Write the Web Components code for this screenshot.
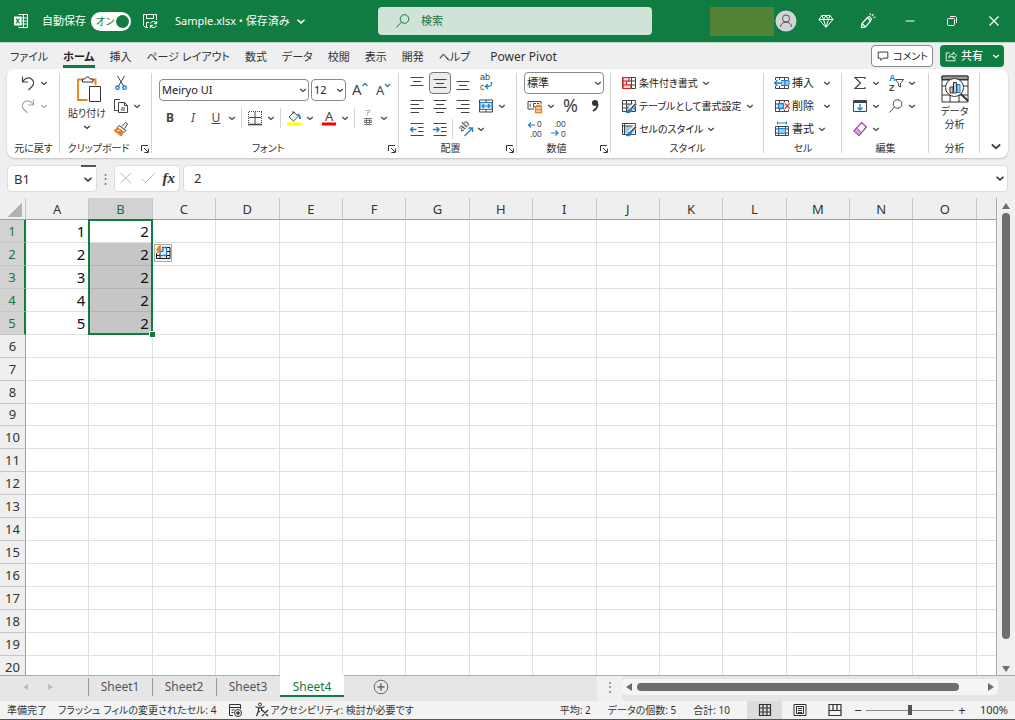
<!DOCTYPE html>
<html lang="ja">
<head>
<meta charset="utf-8">
<title>Sample.xlsx - Excel</title>
<style>
html,body{margin:0;height:100%;overflow:hidden}
body{font:11px/16px "Noto Sans","Noto Sans CJK JP",sans-serif;font-feature-settings:"palt";color:#333;background:#efefef}
</style>
</head>
<body>
<xl-app></xl-app>
<script>
const base = `<style>
*,*::before,*::after{box-sizing:border-box}
:host([hidden]){display:none}
button{font:inherit;font-feature-settings:inherit;color:inherit;background:none;border:0;padding:0;margin:0;display:inline-flex;align-items:center;white-space:nowrap}
a{color:inherit;text-decoration:none;white-space:nowrap}
</style>`;
const define = (name, html) => {
  customElements.define(name, class extends HTMLElement {
    connectedCallback() {
      if (this.shadowRoot) return;
      const root = this.attachShadow({mode: 'open'});
      root.innerHTML = base + (typeof html === 'function' ? html(this) : html);
    }
  });
};

/* Icon shapes, 16 x 16 unless a viewBox is listed in boxes */
const B = '#1e7fcb', O = '#e8811a', L = '#9ccaf0';
const lines = (rows) => rows.map(([x1, x2, y]) => `<path d="M${x1} ${y}H${x2}"/>`).join('');
const tableGrid = '<path d="M1.5 2.5h13v11h-13zM1.5 6h13M1.5 10h13M5.5 2.5v11M10.5 2.5v11"/>';
const boxes = {chev: '0 0 8 8', paste: '0 0 28 28', analyze: '0 0 28 28', avatar: '0 0 22 22', launch: '0 0 8 8'};
const icons = {
  chev: '<path d="M1.2 3L4 5.500 6.800 3" stroke-width="1.3"/>',
  launch: '<path d="M.5 6V.5H7M3 3l4 4M7.400 3.500v4h-4" />',
  excel: '<path d="M5.500 1.500h9v13h-9M5.500 5h9M5.500 8h9M5.500 11h9M10.500 1.500v13"/><path d="M1 3.500h7.500v9H1z" fill="#fff" stroke="none"/><path d="M3 5.500l3.500 5M6.500 5.500L3 10.500" stroke="#107c41" stroke-width="1.300"/>',
  save: '<path d="M6 14.500H3.500l-2-2v-11h13V7M4.500 1.500v4h7v-4M4.500 14V9.500H7"/><path d="M8.500 10.500a3.200 3.200 0 0 1 6 0M14.700 8v2.700H12M14.500 12.500a3.200 3.200 0 0 1-6 0M8.300 15v-2.700H11"/>',
  search: '<circle cx="9.500" cy="6" r="4.300"/><path d="M6.300 9.200L1.500 14.500"/>',
  avatar: '<circle cx="11" cy="11" r="10.500" fill="#d4d4d4" stroke="none"/><circle cx="11" cy="8.500" r="3.600"/><path d="M5.500 17c.3-6.500 10.700-6.500 11 0"/>',
  gem: '<path d="M4 2.500h8l3 4-7 8-7-8zM1 6.500h14M5.500 6.500L8 14M10.500 6.500L8 14M4 2.500l1.500 4L8 2.500l2.500 4 1.500-4"/>',
  pen: '<path d="M7.500 4.500L2 10.500l-.5 4 4-.5L10.500 8zM7.500 4.500L9.500 3.500l2 2.500L10.500 8M2 10.500l3.500 3.500M10 .5l.5 1.500M13.500 1l-1.500 2M15.500 4l-2 .5" stroke-width="1.200"/>',
  min: '<path d="M3.500 8h9"/>',
  restore: '<rect x="3.500" y="5.500" width="7" height="7" rx="1"/><path d="M6 3.500h5.500l1 1V10"/>',
  close: '<path d="M3.500 3.500l9 9M12.500 3.500l-9 9" stroke-width="1.200"/>',
  comment: '<path d="M2.500 3.500h11v7H8L5.500 13v-2.500h-3z"/>',
  share: '<path d="M6.500 4.500h-4v9h10v-3M5.500 10c.5-3 2-4 5-4V3.500l4 4-4 3.500V8.500c-2.500 0-4 .3-5 1.500z"/>',
  undo: '<path d="M2.500 1.500v5.500H8M2.500 7C5 2.500 9 2 11.500 4s3 5 .5 7.500L8.500 15" stroke-width="1.200"/>',
  redo: '<path d="M13.500 1.500v5.500H8M13.500 7C11 2.500 7 2 4.500 4s-3 5-.5 7.500L7.500 15" stroke-width="1.200"/>',
  paste: `<path d="M10 4.500H5v20.500h9.500M19.500 4.500H22.500V10" stroke="${O}" stroke-width="1.800"/><path d="M9.500 7v-3h2.500c1-3 4-3 5 0h3v3z"/><path d="M16.500 11.500h11v15h-11z" fill="#fff"/>`,
  cut: `<path d="M4.500 1l6 10M11.500 1l-6 10"/><circle cx="4.500" cy="12.700" r="1.700" stroke="${B}" stroke-width="1.400"/><circle cx="11.500" cy="12.700" r="1.700" stroke="${B}" stroke-width="1.400"/>`,
  copy: '<path d="M5 12.500H1.500v-11h5.500M5.500 4.500h6l3 3v7h-9zM11.500 4.500v3h3M8 10h4M8 12h4"/>',
  brush: `<path d="M9 5.500L12.500 1.500l2 1.500-3 4.500M6 4.500l7 5-2 2-7-5z"/><path d="M4.500 7l6 4.500-2.500 3.500L1 9.500z" fill="${O}" stroke="${O}"/><path d="M4 10l2.500-1" stroke="#fff"/>`,
  grow: `<text x="0" y="13" font-size="15" fill="#444" stroke="none">A</text><path d="M10.500 4L13 1.500l2.500 2.500" stroke="${B}" stroke-width="1.300"/>`,
  shrink: `<text x="1" y="13" font-size="13" fill="#444" stroke="none">A</text><path d="M10 2L12.500 4.500 15 2" stroke="${B}" stroke-width="1.300"/>`,
  border: '<path d="M2 1.500h13M1.500 2v12M14.500 2v12" stroke-dasharray="1 1"/><path d="M8 2v12M2 7.500h12" /><path d="M1 14.500h14" stroke-width="1.600"/>',
  fill: `<path d="M3 7l5-5 4 4.500-4.500 4.500z"/><path d="M7 1v3"/><path d="M11.500 4c2 .5 2.500 2 2.500 5" stroke="${B}" stroke-width="1.800"/><path d="M1 12.500h14v3H1z" fill="#ff0" stroke="none"/>`,
  fontcolor: '<text x="4" y="11" font-size="13" fill="#444" stroke="none">A</text><path d="M1 12.500h14v3H1z" fill="red" stroke="none"/>',
  ruby: '<g fill="#777" stroke="none"><text x="5" y="5" font-size="6">ア</text><path d="M4 8.500h8M4 14.500h8M6.500 8.500v6M9.500 8.500v6M4.500 10.500h7v2h-7z" stroke="#777" fill="none"/></g>',
  atop: lines([[1.5, 14.5, 2.500], [4, 12, 6.500], [1.5, 14.500, 10.500]]),
  amid: lines([[1.5, 14.5, 4.500], [4, 12, 8.500], [1.5, 14.500, 12.500]]),
  abot: lines([[1.5, 14.5, 6.500], [4, 12, 10.500], [1.5, 14.500, 14.500]]),
  wrap: `<g fill="#444" stroke="none" font-size="9" font-family="Liberation Sans"><text x="2" y="5">ab</text><text x="2" y="15">c</text></g><path d="M13.500 7v2c0 2-1 2.500-6 2.500M10 9l-2.500 2.500L10 14" stroke="${B}" stroke-width="1.300"/>`,
  al: lines([[1.5, 14.5, 2.500], [1.5, 10, 6.500], [1.5, 14.500, 10.500], [1.5, 10, 14.500]]),
  ac: lines([[1.5, 14.5, 2.500], [4, 12, 6.500], [1.5, 14.500, 10.500], [4, 12, 14.500]]),
  ar: lines([[1.5, 14.5, 2.500], [6, 14.5, 6.500], [1.5, 14.500, 10.500], [6, 14.500, 14.500]]),
  merge: `<path d="M1.500 2h13v12h-13zM1.500 4.500h13M1.500 11.500h13M8 2v2M8 12v2"/><path d="M2 4.500h12v7H2z" fill="#d5eaf9" stroke="${B}"/><path d="M4 8h8M6 6L4 8l2 2M10 6l2 2-2 2" stroke="${B}" stroke-width="1.200"/>`,
  outd: lines([[1.5, 14.5, 2.500], [9, 14.5, 6.500], [9, 14.5, 10.500], [1.5, 14.500, 14.500]]) + `<path d="M1.500 8.500h6M4 6L1.500 8.500 4 11" stroke="${B}" stroke-width="1.400"/>`,
  ind: lines([[1.5, 14.5, 2.500], [9, 14.5, 6.500], [9, 14.5, 10.500], [1.5, 14.500, 14.500]]) + `<path d="M1 8.500h6M4.500 6L7 8.500 4.500 11" stroke="${B}" stroke-width="1.400"/>`,
  orient: `<text font-size="10" font-family="Liberation Sans" transform="translate(5 11) rotate(-45)" fill="#444" stroke="none">ab</text><path d="M7.500 15L15.500 7M11.500 7h4v4" stroke="${B}" stroke-width="1.300"/>`,
  currency: `<path d="M1 3.500h13v3M1 3.500v7.500h6M4 5.500a2 2 0 0 0 0 3.500M9 5.500H6.500V9H8M12 5.500h-2"/><path d="M8.500 8.500h6v6h-6z" fill="#fbe3cb" stroke="${O}" stroke-width="1.300"/><path d="M8.500 11.500h6M9 8.500c1-1.500 4-1.500 5 0" stroke="${O}" stroke-width="1.300"/>`,
  percent: '<text x="0" y="14" font-size="18" fill="#444" stroke="none">%</text>',
  comma: '<circle cx="8" cy="5" r="3" fill="#333" stroke="none"/><path d="M10 4c1.500 4-.5 7-4 9" stroke="#333" stroke-width="1.800"/>',
  incdec: `<g fill="#444" stroke="none" font-size="8.500" font-family="Liberation Sans"><text x="10" y="6">0</text><text x="3" y="15.500">.00</text></g><path d="M1 4h7M4 1.500L1.500 4 4 6.500" stroke="${B}" stroke-width="1.200"/>`,
  decdec: `<g fill="#444" stroke="none" font-size="8.500" font-family="Liberation Sans"><text x="3" y="6">.00</text><text x="10" y="15.500">0</text></g><path d="M0 12h7M4.500 9.500L7 12l-2.500 2.500" stroke="${B}" stroke-width="1.200"/>`,
  cond: `${tableGrid}<path d="M2 2.500h6v3.500H2zM2 10h8v3.500H2zM2 6h3.500v4H2z" fill="#f9d2d2" stroke="#d22" stroke-width="1.200"/>`,
  tstyle: `<path d="M5.500 6h9v7.500h-9z" fill="${L}" stroke="none"/>${tableGrid}<path d="M14.500 5L8 12.500" stroke="#fff" stroke-width="4"/><path d="M15 5.500L9.500 11.500" stroke-width="1.800"/><path d="M8.500 11c-2 .5-1 2.500-3.500 3.500 3 .8 5 0 5.500-2z" fill="${B}" stroke="${B}"/>`,
  cstyle: `<path d="M3.500 5h10v7h-10z" fill="${L}" stroke="none"/><path d="M1.500 2.500h13v11h-13zM1.500 5h13M3.500 2.500v11"/><path d="M14.500 5L8 12.500" stroke="#fff" stroke-width="4"/><path d="M15 5.500L9.500 11.500" stroke-width="1.800"/><path d="M8.500 11c-2 .5-1 2.500-3.500 3.500 3 .8 5 0 5.500-2z" fill="${B}" stroke="${B}"/>`,
  cins: `${tableGrid}<path d="M6.500 5.500h8.500v5H6.500z" fill="${L}" stroke="${B}"/><path d="M0 5h7v6H0z" fill="#fff" stroke="none"/><path d="M.5 8H8M3.500 5L.7 8l2.800 3M11 5.500v5" stroke="${B}" stroke-width="1.300"/>`,
  cdel: `${tableGrid}<path d="M9.500 4.500h6.500v7H9.500z" fill="#fff" stroke="none"/><path d="M4.500 5.500h5v5h-5z" fill="${L}" stroke="${B}" stroke-width="1.300"/><path d="M11 5.500l4.500 5M15.500 5.500l-4.500 5" stroke="#e03030" stroke-width="1.300"/>`,
  cfmt: `<path d="M1.500 5.500h13v9h-13zM1.500 8h13M1.500 12h13M4.500 5v9.500M11.500 5v9.500"/><path d="M4.500 7.500h7v5h-7z" fill="${L}" stroke="${B}"/><path d="M3.500 2h9M3.500.5v3M12.500.5v3" stroke="${B}"/>`,
  sigma: '<path d="M13 4V2.500H3L8.500 8 3 13.500h10V12" stroke-width="1.200"/>',
  sort: `<g stroke="none" font-size="9" font-weight="700" font-family="Liberation Sans"><text x="1" y="6" fill="${B}">A</text><text x="1" y="16" fill="#444">Z</text></g><path d="M7.500 4.500h8l-3 4V12l-2-1V8.500z"/>`,
  filldown: `<path d="M1.500 2.500h13v11h-13z"/><path d="M1.500 4h13" stroke-width="2"/><path d="M8 6v6M5.500 9.500L8 12l2.500-2.500" stroke="${B}" stroke-width="1.300"/>`,
  eraser: '<path d="M9.500 1.500l5 4.500-7.500 8.500L2 10z" stroke="#a33bb5" stroke-width="1.200"/><path d="M4.500 7l5 4.500-2.500 3L2 10z" fill="#d9a5e2" stroke="#a33bb5"/>',
  analyze: `<path d="M1 1h26v26H1zM1 5h26M1 11h26M1 20h26M9 20v7M18 20v7"/><path d="M1 1h26v3.500H1z" fill="#999"/><circle cx="13.500" cy="12.500" r="9" fill="#fff"/><path d="M20 19l7 7" stroke-width="2"/><path d="M9 12h3v6H9zM12.500 7.500h3v10.500h-3z" fill="#ccc"/><path d="M16 9.500h3v8h-3z" fill="${L}" stroke="${B}"/>`,
  no: '<path d="M2.500 3l10.500 10M13 3L2.500 13" stroke="#bbb"/>',
  yes: '<path d="M1.500 8.500l4 4L15 3" stroke="#bbb"/>',
  flash: `<path d="M7 2.500h8v11H1.500V8M1.500 10.500H15M8 6.500h7M11.500 2.500v11M5 9v4.500"/><path d="M8 2.500h3.500v8H5V6.500h3z" fill="#fff" stroke="${B}" stroke-width="1.300"/><path d="M4 1L1.500 5h2L2 8.500 6.500 4h-2L6 1z" fill="${O}" stroke="${O}"/>`,
  plus: '<circle cx="8" cy="8" r="6.800"/><path d="M8 4.500v7M4.500 8h7" stroke-width="1.500"/>',
  macro: '<path d="M6 13.500H2.500v-11h11V7M2.500 5.500h11M4.500 8h3M4.500 10.500h2"/><circle cx="11" cy="11" r="3.500"/><circle cx="11" cy="11" r="1.300" fill="#444"/>',
  access: '<circle cx="6" cy="2.500" r="1.500"/><path d="M1.500 4.500C4 6 8 6 10.500 4.500M4.500 6v3L2.500 14M7.500 6v3M4.500 10l1.500-.5M8 8l6 6M14 8l-6 6" stroke-width="1.200"/>',
  normal: '<path d="M2.500 2.500h11v11h-11zM2.500 6h11M2.500 10h11M6 2.500v11M10 2.500v11" stroke-width="1.200"/>',
  page: '<path d="M2 2.500h12v11H2zM4.500 4.500h7v7h-7zM6 6.500h4M6 8.500h4M6 10.500h4"/>',
  brk: '<path d="M2 2.500h12v11H2zM6 2.500v6h4v-6M10 8.500h4M2 8.500h4" stroke-width="1.200"/>'
};
define('xl-icon', (el) => {
  const n = el.getAttribute('name');
  const s = el.getAttribute('size') || (n === 'chev' || n === 'launch' ? 8 : 16);
  return `<style>:host{display:inline-flex;flex:none}svg{display:block;overflow:visible}</style>
  <svg width="${s}" height="${s}" viewBox="${boxes[n] || '0 0 16 16'}" fill="none" stroke="currentColor" aria-hidden="true">${icons[n]}</svg>`;
});

/* Ribbon command: icon, optional caption, optional menu arrow */
define('xl-btn', (el) => {
  const a = (k) => el.getAttribute(k), has = (k) => el.hasAttribute(k);
  return `<style>
  :host{display:inline-flex;flex:none}
  button{height:22px;padding:0 var(--btn-pad,0);gap:4px}
  :host([on]) button{background:#ededed;border:1px solid #777;border-radius:4px;padding:0 2px}
  :host([off]){color:#aaa}
  .cap{margin-left:-2px;margin-right:var(--cap-end,0);color:#222}
  </style><button type="button" aria-label="${a('label')}">${a('icon') ? `<xl-icon name="${a('icon')}"></xl-icon>` : ''}<slot></slot>${a('text') ? `<span class="cap">${a('text')}</span>` : ''}${has('menu') ? '<xl-icon name="chev"></xl-icon>' : ''}</button>`;
});

define('xl-select', (el) => `<style>
  :host{display:flex;position:relative;height:22px;flex:none}
  select{appearance:none;flex:1;min-width:0;font:inherit;color:#222;background:#fff;border:1px solid #8a8a8a;border-radius:4px;padding:0 14px 0 2px;margin:0}
  xl-icon{position:absolute;right:2px;top:7px;pointer-events:none}
  </style><select aria-label="${el.getAttribute('label')}"><option>${el.getAttribute('value')}</option></select><xl-icon name="chev"></xl-icon>`);

define('xl-group', (el) => `<style>
  :host{display:grid;grid-template-rows:minmax(0,1fr) 20px;min-width:0;position:relative;padding:2px 0 0}
  :host::after{content:"";position:absolute;right:0;top:4px;bottom:5px;width:1px;background:#d4d4d4}
  footer{display:flex;align-items:center;justify-content:center;position:relative;color:#333;white-space:nowrap;font-size:10px}
  :host([launcher]) footer{padding-right:15px}
  footer button{position:absolute;right:3px;top:7px}
  </style><div><slot></slot></div><footer>${el.getAttribute('label') || ''}${el.hasAttribute('launcher') ? `<button type="button" aria-label="${el.getAttribute('label')}の設定"><xl-icon name="launch"></xl-icon></button>` : ''}</footer>`);

define('xl-titlebar', `<style>
  :host{display:flex;align-items:center;height:43px;background:#107c41;color:#fff;border-bottom:1px solid #b7d8c5}
  .left{flex:1;display:flex;align-items:center;padding-left:13px;min-width:0;white-space:nowrap}
  label{display:flex;align-items:center;margin-left:13px;gap:5px}
  .sw{position:relative;display:flex;width:40px;height:19px}
  .sw input{appearance:none;margin:0;width:40px;height:19px;border-radius:10px;background:#fff}
  .sw span{position:absolute;left:5px;top:1px;color:#107c41;font-size:10px}
  .sw i{position:absolute;right:2px;top:3px;width:13px;height:13px;border-radius:50%;background:#107c41}
  .save{margin-left:11px}.doc{margin-left:17px;gap:6px}
  form{flex:0 1 274px;height:28px;background:#cfe3d7;border-radius:4px;display:flex;align-items:center;padding:0 17px;gap:10px;color:#107c41;margin:0}
  form input{flex:1;min-width:0;border:0;background:none;font:inherit;outline:0;padding:0;color:inherit}
  input::placeholder{color:#217346;opacity:1}
  .right{flex:0 0 363px;display:flex;align-items:center;justify-content:flex-end;padding-right:13px;gap:26px}
  .user{display:flex;align-items:center;gap:1px;margin-right:-5px}
  .user span{width:64px;height:29px;background:#548235}
  .user button{color:#555}
  </style>
  <div class="left"><xl-icon name="excel"></xl-icon>
  <label>自動保存<span class="sw"><input type="checkbox" role="switch" checked><span>オン</span><i></i></span></label>
  <button class="save" aria-label="上書き保存"><xl-icon name="save"></xl-icon></button>
  <button class="doc">Sample.xlsx • 保存済み<xl-icon name="chev" size="10"></xl-icon></button></div>
  <form role="search"><xl-icon name="search"></xl-icon><input type="search" aria-label="検索" placeholder="検索"></form>
  <div class="right"><div class="user"><span></span><button aria-label="アカウント"><xl-icon name="avatar" size="22"></xl-icon></button></div>
  <button aria-label="プレミアム"><xl-icon name="gem"></xl-icon></button><button aria-label="ペン"><xl-icon name="pen"></xl-icon></button>
  <button aria-label="最小化"><xl-icon name="min"></xl-icon></button><button aria-label="元に戻す(縮小)"><xl-icon name="restore"></xl-icon></button><button aria-label="閉じる"><xl-icon name="close"></xl-icon></button></div>`);

define('xl-tabs', `<style>
  :host{display:flex;align-items:center;height:26px;padding:0 11px 0 10px}
  nav{display:flex;gap:15px;flex:1;align-items:center}
  nav a{height:20px;line-height:18px;margin-top:4px}
  nav a[aria-current]{font-weight:700;border-bottom:3px solid #107c41;color:#222}
  nav a[lang]{font-size:12px;margin-left:5px}
  .c,.s{height:22px;border-radius:4px;margin-top:-1px;gap:3px;justify-content:center}
  .c{border:1px solid #8a8a8a;background:#fff;width:62px;font-size:10px;margin-right:7px;color:#222}
  .s{background:#107c41;color:#fff;width:64px;font-weight:500}
  .s xl-icon:last-child{margin-left:6px}
  </style><nav><a href="#">ファイル</a><a href="#" aria-current="page">ホーム</a><a href="#">挿入</a><a href="#">ページ レイアウト</a><a href="#">数式</a><a href="#">データ</a><a href="#">校閲</a><a href="#">表示</a><a href="#">開発</a><a href="#">ヘルプ</a><a href="#" lang="en">Power Pivot</a></nav>
  <button class="c"><xl-icon name="comment" size="14"></xl-icon>コメント</button><button class="s"><xl-icon name="share" size="14"></xl-icon>共有<xl-icon name="chev"></xl-icon></button>`);

define('xl-ribbon', `<style>
  :host{display:flex;margin:0 7px;height:89px;background:#fff;border-radius:8px;box-shadow:0 1px 2px #0003;color:#444}
  xl-group{flex:1 1 0}
  .undo{flex-grow:53}.clip{flex-grow:92}.font{flex-grow:247}.align{flex-grow:118}.num{flex-grow:94}.style{flex-grow:153}.cells{flex-grow:78}.edit{flex-grow:87}.ana{flex-grow:51}
  .row{display:flex;align-items:center;height:23px}
  .col{display:flex;flex-direction:column}
  .undo .row{padding-left:13px}
  .clipbody{display:flex;padding-left:7px;gap:6px}
  .big{flex-direction:column;width:40px;padding-top:4px;color:#333;font-size:10px}
  .big span{line-height:13px}
  .clipbody .big span{margin:4px 0 3px}
  .font .row{padding-left:7px;gap:2px}
  .font .row:first-child{padding-top:8px;height:30px}
  .font .row:last-child{padding-left:10px;gap:7px;height:34px}
  .wide{width:150px}.narrow{width:35px;margin-right:4px}.font .row:first-child xl-btn+xl-btn{margin-left:5px}
  .g{width:16px;text-align:center;font-size:12px}
  .sep{width:1px;height:20px;background:#d4d4d4}
  .font .sep{margin:0 -2px}
  .align .row{padding-left:7px;gap:1px;--btn-pad:3px}
  .num .row{padding-left:10px;gap:8px}.num .row:first-child{padding-left:7px}.num xl-select{width:80px}
  .style .row,.cells .row,.edit .row{padding-left:10px;gap:8px}
  .style .row{font-size:10px}
  .far{--cap-end:5px}
  .ana .big{width:100%;gap:2px}
  .end{flex:28 1 0;display:flex;align-items:flex-end;justify-content:center;padding-bottom:6px}
  .end button{padding-left:4px}
  </style>
  <xl-group class="undo" label="元に戻す"><div class="row"><xl-btn icon="undo" label="元に戻す" menu></xl-btn></div><div class="row"><xl-btn icon="redo" label="やり直し" menu off></xl-btn></div></xl-group>
  <xl-group class="clip" label="クリップボード" launcher><div class="clipbody"><button class="big"><xl-icon name="paste" size="28"></xl-icon><span>貼り付け</span><xl-icon name="chev"></xl-icon></button>
    <div class="col"><div class="row"><xl-btn icon="cut" label="切り取り"></xl-btn></div><div class="row"><xl-btn icon="copy" label="コピー" menu></xl-btn></div><div class="row"><xl-btn icon="brush" label="書式のコピー"></xl-btn></div></div></div></xl-group>
  <xl-group class="font" label="フォント" launcher><div class="row"><xl-select class="wide" label="フォント" value="Meiryo UI"></xl-select><xl-select class="narrow" label="フォント サイズ" value="12"></xl-select><xl-btn icon="grow" label="拡大"></xl-btn><xl-btn icon="shrink" label="縮小"></xl-btn></div>
    <div class="row"><xl-btn label="太字"><b class="g">B</b></xl-btn><xl-btn label="斜体"><i class="g">I</i></xl-btn><xl-btn label="下線" menu><u class="g">U</u></xl-btn><span class="sep"></span><xl-btn icon="border" label="罫線" menu></xl-btn><span class="sep"></span><xl-btn icon="fill" label="塗りつぶし" menu></xl-btn><xl-btn icon="fontcolor" label="フォントの色" menu></xl-btn><span class="sep"></span><xl-btn icon="ruby" label="ふりがな" menu></xl-btn></div></xl-group>
  <xl-group class="align" label="配置" launcher><div class="row"><xl-btn icon="atop" label="上揃え"></xl-btn><xl-btn icon="amid" label="上下中央揃え" on></xl-btn><xl-btn icon="abot" label="下揃え"></xl-btn><xl-btn icon="wrap" label="折り返し"></xl-btn></div>
    <div class="row"><xl-btn icon="al" label="左揃え"></xl-btn><xl-btn icon="ac" label="中央揃え"></xl-btn><xl-btn icon="ar" label="右揃え"></xl-btn><xl-btn icon="merge" label="セルを結合" menu></xl-btn></div>
    <div class="row"><xl-btn icon="outd" label="インデントを減らす"></xl-btn><xl-btn icon="ind" label="インデントを増やす"></xl-btn><span class="sep"></span><xl-btn icon="orient" label="方向" menu></xl-btn></div></xl-group>
  <xl-group class="num" label="数値" launcher><div class="row"><xl-select label="表示形式" value="標準"></xl-select></div>
    <div class="row"><xl-btn icon="currency" label="通貨" menu></xl-btn><xl-btn icon="percent" label="パーセント"></xl-btn><xl-btn icon="comma" label="桁区切り"></xl-btn></div>
    <div class="row"><xl-btn icon="incdec" label="小数点以下を増やす"></xl-btn><xl-btn icon="decdec" label="小数点以下を減らす"></xl-btn></div></xl-group>
  <xl-group class="style" label="スタイル"><div class="row"><xl-btn icon="cond" label="条件付き書式" text="条件付き書式" menu></xl-btn></div><div class="row"><xl-btn icon="tstyle" label="テーブルとして書式設定" text="テーブルとして書式設定" menu></xl-btn></div><div class="row"><xl-btn icon="cstyle" label="セルのスタイル" text="セルのスタイル" menu></xl-btn></div></xl-group>
  <xl-group class="cells" label="セル"><div class="row far"><xl-btn icon="cins" label="挿入" text="挿入" menu></xl-btn></div><div class="row far"><xl-btn icon="cdel" label="削除" text="削除" menu></xl-btn></div><div class="row"><xl-btn icon="cfmt" label="書式" text="書式" menu></xl-btn></div></xl-group>
  <xl-group class="edit" label="編集"><div class="row"><xl-btn icon="sigma" label="合計" menu></xl-btn><xl-btn icon="sort" label="並べ替えとフィルター" menu></xl-btn></div><div class="row"><xl-btn icon="filldown" label="フィル" menu></xl-btn><xl-btn icon="search" label="検索と選択" menu></xl-btn></div><div class="row"><xl-btn icon="eraser" label="クリア" menu></xl-btn></div></xl-group>
  <xl-group class="ana" label="分析"><button class="big"><xl-icon name="analyze" size="28"></xl-icon><span>データ<br>分析</span></button></xl-group>
  <div class="end"><button aria-label="リボンを折りたたむ"><xl-icon name="chev" size="12"></xl-icon></button></div>`);

define('xl-formulabar', `<style>
  :host{display:flex;align-items:center;height:40px;padding:0 7px;font-size:13px;color:#333}
  div{height:27px;background:#fff;border:1px solid #dcdcdc;border-radius:4px;display:flex;align-items:center}
  input{border:0;outline:0;background:none;font:inherit;color:inherit;min-width:0;flex:1;padding:0}
  .name{width:90px;padding:2px 3px 0 6px;position:relative}
  .name::after{content:"";position:absolute;right:0;top:-1px;width:15px;height:2px;background:#555}
  .dots{width:17px;text-align:center;color:#777}
  .fx{width:66px;justify-content:space-between;padding:0 4px 0 3px;margin-right:3px}
  .fx i{font:italic 700 15px/20px "Liberation Serif",serif}
  .val{flex:1;padding:0 2px 0 10px}
  </style><div class="name"><input aria-label="名前ボックス" value="B1"><button aria-label="名前一覧"><xl-icon name="chev" size="10"></xl-icon></button></div><span class="dots">⋮</span>
  <div class="fx"><button aria-label="キャンセル"><xl-icon name="no"></xl-icon></button><button aria-label="入力"><xl-icon name="yes"></xl-icon></button><button aria-label="関数の挿入"><i>fx</i></button></div>
  <div class="val"><input aria-label="数式バー" value="2"><button aria-label="展開"><xl-icon name="chev" size="10"></xl-icon></button></div>`);

define('xl-grid', () => {
  const cols = [...'ABCDEFGHIJKLMNO'];
  const cell = (r, c) => {
    if (c === 'A' && r < 6) return `<td>${r}</td>`;
    if (c === 'B' && r < 6) return r === 1 ? '<td class="act">2</td>' : '<td class="sel">2</td>';
    if (c === 'C' && r === 2) return '<td class="tip"><button aria-label="フラッシュ フィル オプション"><xl-icon name="flash"></xl-icon></button></td>';
    return '<td></td>';
  };
  const rows = Array.from({length: 20}, (_, i) => i + 1).map((r) => `<tr><th scope="row" class="${r < 6 ? 'hot' : ''}">${r}</th>${cols.map((c) => cell(r, c)).join('')}<td></td></tr>`).join('');
  return `<style>
  :host{display:flex;min-height:0;overflow:hidden;background:#f3f3f3}
  .sheet{flex:1;min-width:0;overflow:hidden;border-right:1px solid #ababab}
  table{width:100%;height:calc(100% + 4px);table-layout:fixed;border-collapse:separate;border-spacing:0;background:#fff}
  th,td{padding:0;font-weight:400;line-height:20px;height:20px}
  .rh{width:26px}.last{width:19px}
  thead th{height:22px;background:#efefef;font-size:13px;border-right:1px solid #c6c6c6;border-bottom:1px solid #9e9e9e;color:#333}
  thead th.hot{background:#d2d2d2;color:#217346}
  thead th:last-child{border-right:0}
  .corner::after{content:"";display:block;margin:2px 3px 0 auto;width:15px;height:15px;background:linear-gradient(135deg,transparent 50%,#b2b2b2 50%)}
  tbody th{background:#efefef;font-size:13px;border-bottom:1px solid #c6c6c6;border-right:1px solid #9e9e9e;color:#333}
  tbody th.hot{background:#d2d2d2;color:#217346;border-right:2px solid #107c41}
  td{border-right:1px solid #e0e0e0;border-bottom:1px solid #e0e0e0;text-align:right;font-size:15px;color:#111;padding-right:3px}
  td:last-child{border-right:0}
  td.sel{background:#c6c6c6;border-bottom-color:#b2b2b2}
  td.act,td.tip{position:relative}
  td.act::before{content:"";position:absolute;z-index:1;left:-1px;top:-1px;width:calc(100% + 2px);height:calc(500% + 6px);border:2px solid #107c41}
  td.act::after{content:"";position:absolute;z-index:2;right:-4px;top:calc(500% + 1px);width:7px;height:7px;background:#107c41;border:1px solid #fff}
  .tip button{position:absolute;left:1px;top:1px;width:18px;height:18px;background:#f5f5f5;border:1px solid #aaa}
  .bar{width:18px;display:flex;flex-direction:column;align-items:center;padding:5px 0 0;background:#f0f0f0}
  .bar b{width:8px;flex:0 1 426px;border-radius:4px;background:#6e6e6e;margin:4px 0 auto}
  .up,.dn{border:4px solid transparent;height:0}
  .up{border-bottom:6px solid #6e6e6e;border-top:0}.dn{border-top:6px solid #6e6e6e;border-bottom:0;margin-bottom:3px}
  </style><div class="sheet"><table><colgroup><col class="rh">${cols.map(() => '<col>').join('')}<col class="last"></colgroup>
  <thead><tr><th class="corner"></th>${cols.map((c) => `<th scope="col" class="${c === 'B' ? 'hot' : ''}">${c}</th>`).join('')}<th></th></tr></thead><tbody>${rows}</tbody></table></div>
  <div class="bar"><span class="up"></span><b></b><span class="dn"></span></div>`;
});

define('xl-sheetbar', `<style>
  :host{display:flex;height:26px;background:#e6e6e6;border-top:1px solid #ababab;font-size:12px;color:#555}
  .nav{width:88px;display:flex;align-items:center;padding-left:23px;gap:20px;padding-bottom:3px}
  .nav i{border:3px solid transparent}.nav .l{border-right:5px solid #bbb;border-left:0}.nav .r{border-left:5px solid #bbb;border-right:0}
  .tabs{display:flex;height:21px}
  .tabs a{width:64px;line-height:22px;text-align:center;position:relative}
  .tabs a::before{content:"";position:absolute;left:0;top:2px;height:18px;width:1px;background:#999}
  .tabs a[aria-current]{background:#fff;color:#107c41;border-bottom:2px solid #107c41;margin-top:-1px;height:22px;line-height:24px}
  .tabs a[aria-current]::before{display:none}
  .add{margin:0 auto 3px 29px;color:#666}
  .dots{width:25px;text-align:center;line-height:22px;background:#f0f0f0;color:#777}
  .sc{flex:0 1 376px;display:flex;align-items:center;background:#f5f5f5;border-radius:4px;margin:3px 17px 6px 0;padding:0 4px}
  .sc b{flex:0 1 322px;height:8px;border-radius:4px;background:#6e6e6e;margin:0 auto 0 5px}
  .sc i{border:4px solid transparent}.sc .l{border-right:6px solid #6e6e6e;border-left:0}.sc .r{border-left:6px solid #6e6e6e;border-right:0}
  </style><div class="nav"><i class="l"></i><i class="r"></i></div><nav class="tabs"><a href="#">Sheet1</a><a href="#">Sheet2</a><a href="#">Sheet3</a><a href="#" aria-current="page">Sheet4</a></nav>
  <button class="add" aria-label="新しいシート"><xl-icon name="plus"></xl-icon></button><span class="dots">⋮</span><div class="sc"><i class="l"></i><b></b><i class="r"></i></div>`);

define('xl-statusbar', `<style>
  :host{display:flex;align-items:center;height:19px;background:#f3f3f3;border-bottom:1px solid #555;padding:0 7px;white-space:nowrap;color:#333;font-size:10px}
  .l,.r{display:flex;align-items:center}
  .l{flex:1;gap:11px}
  .r>span{margin-right:17px}
  .v{width:35px;height:18px;justify-content:center}.v.on{background:#dcdcdc}
  .z{font-size:13px;width:12px;justify-content:center}
  input{appearance:none;width:88px;height:16px;margin:0 2px;background:linear-gradient(#888,#888) center/100% 1px no-repeat}
  input::-webkit-slider-thumb{appearance:none;width:4px;height:10px;background:#555}
  .p{width:40px;justify-content:flex-end;font-size:11px}
  </style><div class="l"><span>準備完了</span><span>フラッシュ フィルの変更されたセル: 4</span><button aria-label="マクロの記録"><xl-icon name="macro"></xl-icon></button><button><xl-icon name="access"></xl-icon>アクセシビリティ: 検討が必要です</button></div>
  <div class="r"><span>平均: 2</span><span>データの個数: 5</span><span>合計: 10</span><button class="v on" aria-label="標準"><xl-icon name="normal"></xl-icon></button><button class="v" aria-label="ページ レイアウト"><xl-icon name="page"></xl-icon></button><button class="v" aria-label="改ページ プレビュー"><xl-icon name="brk"></xl-icon></button>
  <button class="z" aria-label="縮小">−</button><input type="range" aria-label="ズーム" min="0" max="100" value="50"><button class="z" aria-label="拡大">+</button><button class="p">100%</button></div>`);

define('xl-app', `<style>
  :host{display:grid;grid-template-rows:auto auto auto auto minmax(0,1fr) auto auto;height:100vh;background:#efefef}
  </style><xl-titlebar></xl-titlebar><xl-tabs></xl-tabs><xl-ribbon></xl-ribbon><xl-formulabar></xl-formulabar><xl-grid></xl-grid><xl-sheetbar></xl-sheetbar><xl-statusbar></xl-statusbar>`);
</script>
</body>
</html>
